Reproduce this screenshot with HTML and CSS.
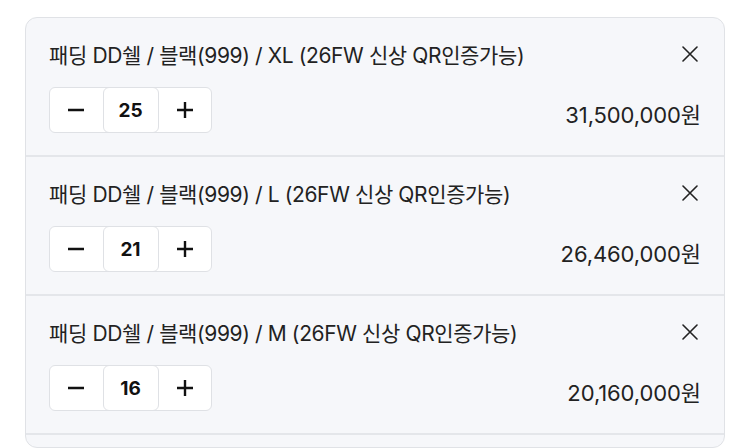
FILE: index.html
```html
<!DOCTYPE html>
<html lang="ko">
<head>
<meta charset="utf-8">
<link rel="stylesheet" href="styles.css">
</head>
<body>
<div class="cart">
  <div class="item">
    <div class="item-head">
      <span class="item-title">패딩 DD쉘 / 블랙(999) / XL (26FW 신상 QR인증가능)</span>
      <button class="remove" aria-label="삭제"><svg width="16" height="16" viewBox="0 0 16 16"><path d="M1 1L15 15M15 1L1 15" stroke="#222" stroke-width="1.6" stroke-linecap="round"/></svg></button>
    </div>
    <div class="item-foot">
      <div class="stepper">
        <button class="step"><svg width="18" height="18" viewBox="0 0 18 18"><path d="M1 9H17" stroke="#111" stroke-width="2.4"/></svg></button>
        <span class="qty">25</span>
        <button class="step"><svg width="18" height="18" viewBox="0 0 18 18"><path d="M1 9H17M9 1V17" stroke="#111" stroke-width="2.4"/></svg></button>
      </div>
      <span class="price">31,500,000원</span>
    </div>
  </div>
  <div class="item">
    <div class="item-head">
      <span class="item-title">패딩 DD쉘 / 블랙(999) / L (26FW 신상 QR인증가능)</span>
      <button class="remove" aria-label="삭제"><svg width="16" height="16" viewBox="0 0 16 16"><path d="M1 1L15 15M15 1L1 15" stroke="#222" stroke-width="1.6" stroke-linecap="round"/></svg></button>
    </div>
    <div class="item-foot">
      <div class="stepper">
        <button class="step"><svg width="18" height="18" viewBox="0 0 18 18"><path d="M1 9H17" stroke="#111" stroke-width="2.4"/></svg></button>
        <span class="qty">21</span>
        <button class="step"><svg width="18" height="18" viewBox="0 0 18 18"><path d="M1 9H17M9 1V17" stroke="#111" stroke-width="2.4"/></svg></button>
      </div>
      <span class="price">26,460,000원</span>
    </div>
  </div>
  <div class="item">
    <div class="item-head">
      <span class="item-title">패딩 DD쉘 / 블랙(999) / M (26FW 신상 QR인증가능)</span>
      <button class="remove" aria-label="삭제"><svg width="16" height="16" viewBox="0 0 16 16"><path d="M1 1L15 15M15 1L1 15" stroke="#222" stroke-width="1.6" stroke-linecap="round"/></svg></button>
    </div>
    <div class="item-foot">
      <div class="stepper">
        <button class="step"><svg width="18" height="18" viewBox="0 0 18 18"><path d="M1 9H17" stroke="#111" stroke-width="2.4"/></svg></button>
        <span class="qty">16</span>
        <button class="step"><svg width="18" height="18" viewBox="0 0 18 18"><path d="M1 9H17M9 1V17" stroke="#111" stroke-width="2.4"/></svg></button>
      </div>
      <span class="price">20,160,000원</span>
    </div>
  </div>
  <div class="item item-more"></div>
</div>
</body>
</html>
```

FILE: styles.css
```css
* { box-sizing: border-box; }
html, body { margin: 0; padding: 0; background: #fff; }
body {
  font-family: "Inter", "Noto Sans CJK KR", sans-serif;
  color: #222;
  padding: 17px 25px 0 25px;
  height: 448px;
  overflow: hidden;
}
.cart {
  width: 700px;
  border: 1px solid #e0e2e6;
  border-radius: 12px;
  background: #f6f7fa;
  overflow: hidden;
}
.item {
  padding: 22px 23px 22px 23px;
  border-bottom: 2px solid #e4e6ea;
  height: 139px;
}
.item-more {
  height: 12px;
  padding: 0;
  border-bottom: 0;
}
.item-head {
  display: flex;
  justify-content: space-between;
  align-items: center;
  height: 28px;
}
.item-title {
  font-size: 21px;
  letter-spacing: -0.38px;
  color: #222;
}
.remove {
  border: 0;
  background: none;
  padding: 0;
  width: 16px;
  height: 16px;
  margin-right: 3px;
  display: flex;
}
.item-foot {
  margin-top: 19px;
  display: flex;
  justify-content: space-between;
  align-items: center;
}
.stepper {
  display: flex;
  width: 163px;
  height: 46px;
  border: 1px solid #dfe1e5;
  border-radius: 6px;
  background: #fff;
}
.step {
  flex: 1;
  border: 0;
  background: none;
  display: flex;
  align-items: center;
  justify-content: center;
  padding: 0;
}
.qty {
  width: 56px;
  margin: -1px 0;
  border: 1px solid #dfe1e5;
  border-radius: 6px;
  display: flex;
  align-items: center;
  justify-content: center;
  font-size: 19px;
  font-weight: 700;
  color: #111;
}
.price {
  font-size: 22px;
  letter-spacing: -0.1px;
  color: #222;
  margin-top: 6px;
}
```
